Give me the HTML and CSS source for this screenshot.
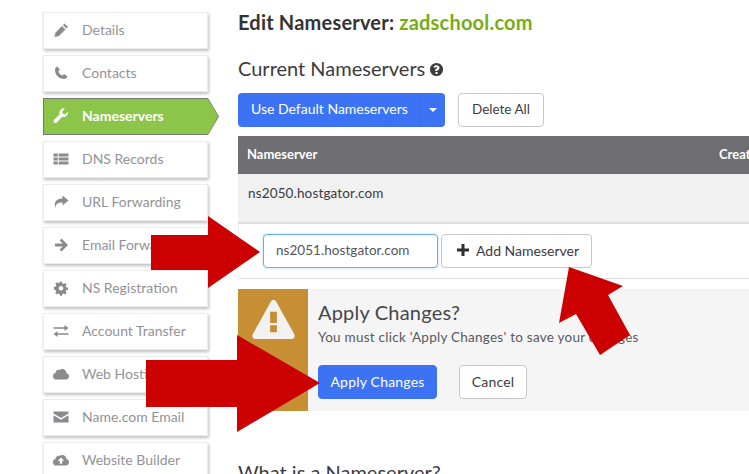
FILE: index.html
```html
<!DOCTYPE html>
<html lang="en">
<head>
<meta charset="utf-8">
<title>Edit Nameserver</title>
<link rel="stylesheet" href="styles.css">
</head>
<body>
<div class="page">
  <nav class="side">
    <a class="item"><svg class="ic" viewBox="0 0 16 16"><path d="M11.500 1.500l3.500 3.500-1.600 1.600-3.500-3.500zM9 3.900l3.500 3.500-6.600 6.600L1.500 15l1-4.500z"/></svg><span>Details</span></a>
    <a class="item"><svg class="ic" viewBox="0 0 16 16"><path d="M4.600 1.500l2.200 3.300-1.500 1.600c.7 1.800 2.300 3.400 4.200 4.200l1.600-1.500 3.300 2.200c-.3 1.500-1.700 2.700-3.200 2.700C6 14 2 9.700 2 4.700c0-1.500 1.100-2.900 2.600-3.200z"/></svg><span>Contacts</span></a>
    <a class="item active"><svg class="ic" viewBox="0 0 16 16"><path d="M15 4.500c0 2.600-2.100 4.600-4.600 4.600-.5 0-1-.1-1.400-.2L3.800 14.500c-.8.700-2 .7-2.700 0s-.7-1.900 0-2.700L6.600 6.600A4.600 4.600 0 0 1 12 .5L9.300 3.300l.5 2.500 2.500.6L14.900 3.800c.1.200.1.500.1.700z"/></svg><span>Nameservers</span></a>
    <a class="item"><svg class="ic" viewBox="0 0 16 16"><path d="M.5 2.500h4.300v3H.5zM5.700 2.500h9.800v3H5.700zM.5 6.500h4.300v3H.5zM5.700 6.500h9.800v3H5.700zM.5 10.500h4.300v3H.5zM5.700 10.500h9.800v3H5.700z"/></svg><span>DNS Records</span></a>
    <a class="item"><svg class="ic" viewBox="0 0 16 16"><path d="M9.500 1.500L15.500 6.500 9.500 11.500V8.500c-4 0-6.500.7-7.300 5.500C.8 8.500 3 4.500 9.500 4.500z"/></svg><span>URL Forwarding</span></a>
    <a class="item"><svg class="ic" viewBox="0 0 16 16"><path d="M8.500 1.500l6.500 6.500-6.500 6.500-1.900-1.900 3.200-3.200H2V6.600h7.800L6.600 3.400z"/></svg><span>Email Forwarding</span></a>
    <a class="item"><svg class="ic" viewBox="0 0 16 16"><path fill-rule="evenodd" d="M6.800 1h2.400l.4 2 1.300.6 1.700-1.100 1.700 1.700-1.100 1.700.6 1.300 2 .4v2.400l-2 .4-.6 1.300 1.100 1.700-1.700 1.700-1.700-1.100-1.300.6-.4 2H6.800l-.4-2-1.300-.6-1.700 1.100-1.700-1.700 1.100-1.700-.6-1.300-2-.4V6.600l2-.4.6-1.300-1.100-1.700 1.700-1.700 1.700 1.100 1.300-.6zM8 5.700a2.600 2.600 0 1 0 0 5.200 2.600 2.600 0 0 0 0-5.200z" transform="translate(.8 .8) scale(.9)"/></svg><span>NS Registration</span></a>
    <a class="item"><svg class="ic" viewBox="0 0 16 16"><path d="M.5 4.300h11V2l4 3-4 3V5.800H.5zM15.500 10.200h-11V8l-4 3 4 3v-2.300h11z"/></svg><span>Account Transfer</span></a>
    <a class="item"><svg class="ic" viewBox="0 0 16 16"><path d="M3.500 13.500a3.300 3.300 0 0 1-1-6.500 3.200 3.200 0 0 1 4-3.200 4.400 4.400 0 0 1 7 3.200 3.300 3.300 0 0 1-.7 6.500z"/></svg><span>Web Hosting</span></a>
    <a class="item"><svg class="ic" viewBox="0 0 16 16"><path d="M.5 2.500h15v1.900L8 8.900.5 4.400zM.5 6.200L8 10.800l7.500-4.600v7.300H.5z"/></svg><span>Name.com Email</span></a>
    <a class="item"><svg class="ic" viewBox="0 0 16 16"><path fill-rule="evenodd" d="M3.500 13.500a3.300 3.300 0 0 1-1-6.500 3.200 3.200 0 0 1 4-3.200 4.400 4.400 0 0 1 7 3.200 3.300 3.300 0 0 1-.7 6.500zM8 5.500L4.800 8.800h2v3h2.400v-3h2z"/></svg><span>Website Builder</span></a>
  </nav>
  <main class="main">
    <h1 class="title">Edit Nameserver: <span class="domain">zadschool.com</span></h1>
    <h2 class="sub">Current Nameservers <svg class="help" viewBox="0 0 16 16"><path fill-rule="evenodd" d="M8 1a7 7 0 1 1 0 14A7 7 0 0 1 8 1zM6.900 10.700v2.100h2.200v-2.100zM8 3.400c-1.500 0-2.600.7-3.200 1.800l1.500 1.100c.4-.6.900-1 1.500-1 .6 0 1 .3 1 .8 0 .5-.4.800-1 1.100-.8.400-1.300 1-1.300 1.900v.5h2.200c0-.5.300-.8.900-1.100.9-.5 1.600-1.100 1.600-2.400 0-1.700-1.500-2.700-3.200-2.700z"/></svg></h2>
    <div class="actions">
      <div class="split"><span class="split-label">Use Default Nameservers</span><span class="split-caret"><i class="caret"></i></span></div>
      <button class="btn btn-delete">Delete All</button>
    </div>
    <div class="thead"><span class="col-name">Nameserver</span><span>Created</span></div>
    <div class="row">ns2050.hostgator.com</div>
    <div class="add-row">
      <div class="input">ns2051.hostgator.com</div>
      <button class="btn btn-add"><svg class="plus" viewBox="0 0 12 12"><path d="M4.500 0h3v4.500H12v3H7.500V12h-3V7.500H0v-3h4.500z"/></svg>Add Nameserver</button>
    </div>
    <section class="notice">
      <div class="notice-icon"><svg class="warn" viewBox="0 0 44 40"><path fill-rule="evenodd" d="M22 0c1.200 0 2.200.7 2.800 1.700l18.500 33.500c1.200 2.200-.3 4.800-2.800 4.800H3.500C1 40-.5 37.400.7 35.200L19.200 1.700C19.800.7 20.800 0 22 0zM18.500 12v11.500h7V12zM18.500 26v7h7v-7z"/></svg></div>
      <div class="notice-body">
        <h3 class="notice-title">Apply Changes?</h3>
        <p class="notice-text">You must click 'Apply Changes' to save your changes</p>
        <div class="notice-actions">
          <button class="btn btn-primary">Apply Changes</button>
          <button class="btn btn-cancel">Cancel</button>
        </div>
      </div>
    </section>
    <h2 class="what">What is a Nameserver?</h2>
  </main>
</div>
<svg class="arrows" viewBox="0 0 749 474">
  <polygon points="151,235 208,235 208,216 260,252 208,288 208,270 151,270"/>
  <polygon points="146,360 237,360 237,335 320,383 237,432 237,407 146,407"/>
  <polygon points="569,267 623,286 608,295 630,335 600,355 576,314 559,323"/>
</svg>
</body>
</html>
```
FILE: styles.css
```css
* { box-sizing: border-box; }
html, body { margin: 0; height: 100%; }
body {
  position: relative;
  width: 749px;
  height: 474px;
  overflow: hidden;
  background: #fff;
  font-family: Lato, "Open Sans", sans-serif;
  color: #3c3b40;
}
.page { display: flex; align-items: flex-start; height: 474px; overflow: hidden; }
.side {
  flex: none;
  width: 238px;
  padding: 12px 30px 0 43px;
  display: flex;
  flex-direction: column;
  gap: 6px;
}
.item {
  flex: none;
  position: relative;
  height: 37px;
  display: flex;
  align-items: center;
  padding: 0 0 2px 9px;
  background: #fff;
  border: 1px solid #ececec;
  box-shadow: 1px 2px 3px rgba(0,0,0,.25);
  color: #939397;
  font-size: 14px;
}
.ic { width: 16px; height: 16px; fill: #8b8b8f; margin-right: 13px; flex: none; }
.active {
  background: #8cc54a;
  border: 1px solid #77777a;
  border-right: none;
  box-shadow: none;
  color: #fff;
  font-weight: 700;
}
.active::before,
.active::after {
  content: "";
  position: absolute;
  clip-path: polygon(0 0, 100% 50%, 0 100%);
}
.active::before {
  right: -11px;
  top: -1px;
  width: 11px;
  height: 37px;
  background: #77777a;
}
.active::after {
  right: -10px;
  top: 0;
  width: 10px;
  height: 35px;
  background: #8cc54a;
}
.active .ic { fill: #fff; }
.main { flex: none; width: 511px; }
.title { margin: 11px 0 0; font-size: 20px; line-height: 22px; font-weight: 700; color: #333; letter-spacing: .2px; }
.domain { color: #76ad15; }
.sub { margin: 21px 0 0; font-size: 20px; line-height: 28px; font-weight: 400; color: #3c3b40; display: flex; align-items: center; gap: 4px; }
.help { width: 15px; height: 15px; fill: #3c3b40; margin-top: 2px; }
.actions { display: flex; align-items: stretch; gap: 13px; margin-top: 11px; height: 34px; }
.split {
  width: 207px;
  display: flex;
  background: #3c73f5;
  border-radius: 4px;
  color: #fff;
  font-size: 14px;
}
.split-label { flex: 1; display: flex; align-items: center; padding: 0 0 3px 13px; border-right: 1px solid #3a6ce6; }
.split-caret { width: 25px; display: flex; align-items: center; justify-content: center; }
.caret { width: 0; height: 0; border: 4px solid transparent; border-top-color: #fff; border-bottom: none; }
.btn {
  font: inherit;
  font-size: 14px;
  letter-spacing: .2px;
  color: #3c3b40;
  background: #fff;
  border: 1px solid #c8c8c8;
  border-radius: 4px;
  padding: 0 0 2px;
  height: 34px;
}
.btn-delete { width: 86px; letter-spacing: 0; font-size: 13.500px; }
.thead {
  margin-top: 9px;
  height: 38px;
  padding: 0 0 2px 9px;
  background: #6f6e73;
  color: #fff;
  font-weight: 700;
  font-size: 13px;
  display: flex;
  align-items: center;
  white-space: nowrap;
  overflow: hidden;
}
.col-name { width: 472px; flex: none; }
.row {
  height: 50px;
  padding: 11px 0 0 10px;
  background: #f1f1f1;
  border-bottom: 2px solid #dedede;
  font-size: 13.500px;
  line-height: 17px;
  letter-spacing: .15px;
}
.add-row {
  height: 55px;
  display: flex;
  align-items: center;
  gap: 3px;
  padding: 0 0 0 24px;
  border-bottom: 1px solid #ddd;
  border-left: 1px solid #eee;
}
.input {
  width: 175px;
  height: 34px;
  display: flex;
  align-items: center;
  padding: 0 0 2px 12px;
  border: 1px solid #66afe9;
  border-radius: 4px;
  box-shadow: 0 0 3px rgba(102,175,233,.5);
  font-size: 13.500px;
  letter-spacing: .05px;
  color: #55565a;
}
.btn-add { width: 151px; padding: 0 0 2px 3px; display: flex; align-items: center; justify-content: center; letter-spacing: 0; }
.plus { width: 12px; height: 12px; fill: #2e2d32; margin-right: 7px; }
.notice { margin-top: 10px; height: 122px; display: flex; background: #f5f5f5; }
.notice-icon { width: 70px; flex: none; background: #c78f33; display: flex; justify-content: center; padding-top: 11px; }
.warn { width: 43px; height: 39px; fill: #f1f1f1; }
.notice-body { padding: 11px 0 0 10px; }
.notice-title { margin: 0; font-size: 20px; line-height: 24px; font-weight: 400; letter-spacing: .2px; color: #47464b; }
.notice-text { margin: 4px 0 0; font-size: 13.500px; line-height: 18px; letter-spacing: .25px; color: #5a595e; }
.notice-actions { display: flex; gap: 22px; margin-top: 19px; }
.btn-primary { width: 119px; background: #3c73f5; border-color: #3c73f5; color: #fff; }
.btn-cancel { width: 68px; }
.what { margin: 49px 0 0; font-size: 20px; line-height: 24px; font-weight: 400; color: #3c3b40; }
.arrows { position: absolute; left: 0; top: 0; width: 749px; height: 474px; fill: #cc0000; pointer-events: none; }
```
